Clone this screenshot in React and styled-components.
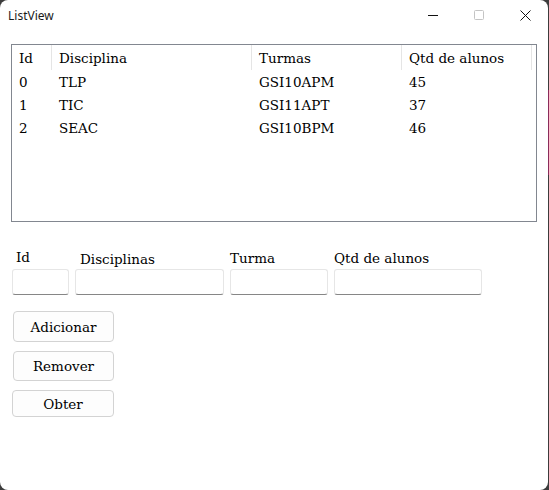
import React from "react";
import styled, { createGlobalStyle } from "styled-components";

const GlobalStyle = createGlobalStyle`
  html, body {
    margin: 0;
    padding: 0;
    background: #3c3c3c;
  }
  * {
    box-sizing: border-box;
  }
`;

const Desktop = styled.div`
  display: flex;
  width: 549px;
  height: 490px;
`;

const Win = styled.div`
  width: 548px;
  height: 490px;
  background: #ffffff;
  border-radius: 8px;
  display: flex;
  flex-direction: column;
  font-family: "DejaVu Serif", "Liberation Serif", serif;
  font-size: 13.5px;
  color: #000;
`;

const Edge = styled.div`
  width: 1px;
  height: 490px;
  background: linear-gradient(
    to bottom,
    #3c3c3c 0px,
    #3c3c3c 90px,
    #8a2b5a 90px,
    #8a2b5a 175px,
    #3c3c3c 175px
  );
`;

const TitleBar = styled.div`
  height: 30px;
  display: flex;
  align-items: center;
  padding-left: 8px;
  font-family: "Noto Sans", "Open Sans", sans-serif;
  font-size: 12px;
  color: #1a1a1a;
`;

const TitleText = styled.span`
  flex: 1;
`;

const Controls = styled.div`
  display: flex;
  height: 30px;
`;

const ControlBtn = styled.div`
  width: 46px;
  height: 30px;
  display: flex;
  align-items: center;
  justify-content: center;
`;

const ListBox = styled.div`
  margin: 14px 0 0 11px;
  width: 526px;
  height: 178px;
  border: 1px solid #828790;
`;

const HeaderRow = styled.div`
  display: grid;
  grid-template-columns: 40px 200px 150px 130px;
  height: 25px;
`;

const HeaderCell = styled.div`
  display: flex;
  align-items: center;
  padding-left: 7px;
  border-right: 1px solid #e5e5e5;
  height: 25px;
`;

const DataRow = styled.div`
  display: grid;
  grid-template-columns: 40px 200px 150px 130px;
  height: 23px;
`;

const DataCell = styled.div`
  display: flex;
  align-items: center;
  padding-left: 7px;
`;

const Form = styled.div`
  display: flex;
  gap: 6px;
  margin: 23px 0 0 12px;
`;

const Field = styled.div`
  display: flex;
  flex-direction: column;
  width: ${(p) => p.$w}px;
`;

const Label = styled.label`
  height: 24px;
  display: flex;
  align-items: center;
  padding-left: ${(p) => p.$indent || 0}px;
  padding-top: ${(p) => p.$drop || 0}px;
`;

const Input = styled.div`
  height: 26px;
  border: 1px solid #e6e6e6;
  border-bottom: 1px solid #868686;
  border-radius: 3px;
  background: #fff;
`;

const Buttons = styled.div`
  display: flex;
  flex-direction: column;
  margin-top: 16px;
`;

const Btn = styled.div`
  width: ${(p) => p.$w}px;
  height: ${(p) => p.$h}px;
  margin-left: ${(p) => p.$left}px;
  margin-bottom: ${(p) => p.$gap}px;
  border: 1px solid #d3d3d3;
  border-radius: 4px;
  background: #fdfdfd;
  display: flex;
  align-items: center;
  justify-content: center;
`;

const rows = [
  ["0", "TLP", "GSI10APM", "45"],
  ["1", "TIC", "GSI11APT", "37"],
  ["2", "SEAC", "GSI10BPM", "46"],
];

export default function App() {
  return (
    <Desktop>
      <GlobalStyle />
      <Win>
        <TitleBar>
          <TitleText>ListView</TitleText>
          <Controls>
            <ControlBtn>
              <svg width="10" height="10" viewBox="0 0 10 10">
                <path d="M0 5.5h10" stroke="#111" strokeWidth="1" />
              </svg>
            </ControlBtn>
            <ControlBtn>
              <svg width="10" height="10" viewBox="0 0 10 10">
                <rect x="0.5" y="0.5" width="9" height="9" rx="1" fill="none" stroke="#c4c4c4" />
              </svg>
            </ControlBtn>
            <ControlBtn>
              <svg width="11" height="11" viewBox="0 0 11 11">
                <path d="M0.5 0.5l10 10M10.5 0.5l-10 10" stroke="#111" strokeWidth="1" />
              </svg>
            </ControlBtn>
          </Controls>
        </TitleBar>

        <ListBox>
          <HeaderRow>
            <HeaderCell>Id</HeaderCell>
            <HeaderCell>Disciplina</HeaderCell>
            <HeaderCell>Turmas</HeaderCell>
            <HeaderCell>Qtd de alunos</HeaderCell>
          </HeaderRow>
          {rows.map((r) => (
            <DataRow key={r[0]}>
              {r.map((c, i) => (
                <DataCell key={i}>{c}</DataCell>
              ))}
            </DataRow>
          ))}
        </ListBox>

        <Form>
          <Field $w={57}>
            <Label $indent={4}>Id</Label>
            <Input />
          </Field>
          <Field $w={149}>
            <Label $indent={5} $drop={3}>Disciplinas</Label>
            <Input />
          </Field>
          <Field $w={98}>
            <Label $drop={1}>Turma</Label>
            <Input />
          </Field>
          <Field $w={148}>
            <Label $drop={1}>Qtd de alunos</Label>
            <Input />
          </Field>
        </Form>

        <Buttons>
          <Btn $w={101} $h={31} $left={13} $gap={9}>Adicionar</Btn>
          <Btn $w={101} $h={30} $left={13} $gap={9}>Remover</Btn>
          <Btn $w={102} $h={27} $left={12} $gap={0}>Obter</Btn>
        </Buttons>
      </Win>
      <Edge />
    </Desktop>
  );
}
